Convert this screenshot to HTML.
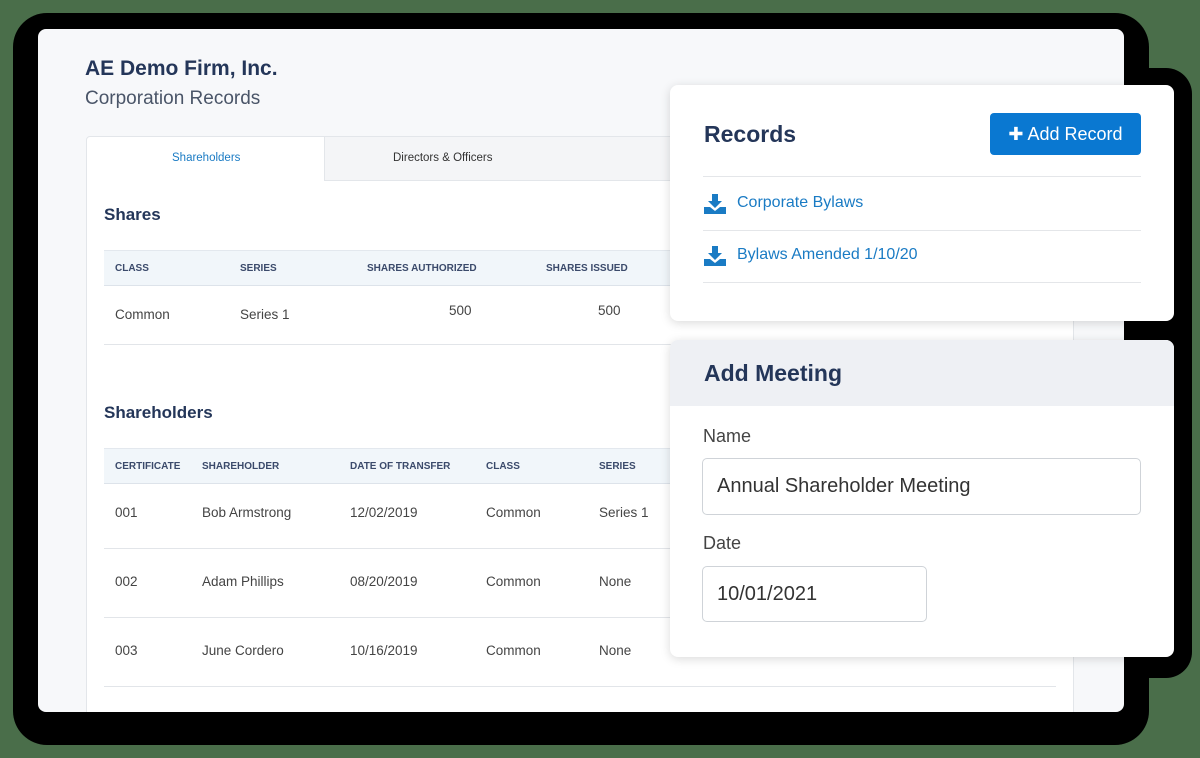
<!DOCTYPE html>
<html><head><meta charset="utf-8"><style>
*{box-sizing:border-box;margin:0;padding:0}
body{width:1200px;height:758px;background:#4a6e4a;position:relative;overflow:hidden;font-family:"Liberation Sans",sans-serif;color:#444}
.abs{position:absolute}
.blk{background:#000}
.main{left:38px;top:29px;width:1086px;height:683px;background:#f7f8fa;border-radius:8px;overflow:hidden}
.t1{left:47px;top:28px;font-size:21px;font-weight:bold;color:#243659}
.t2{left:47px;top:59px;font-size:19px;color:#4a5568}
.panel{left:48px;top:107px;width:988px;height:600px;background:#fff;border:1px solid #e3e6ea;border-radius:4px}
.tabbar{left:237px;top:0;width:750px;height:44px;background:#f4f5f7;border-bottom:1px solid #e3e6ea;border-left:1px solid #e3e6ea}
.h{font-size:17px;font-weight:bold;color:#243659}
.th{background:#f1f6fa;border-top:1px solid #e3e8ee;border-bottom:1px solid #dde3ea;height:36px;left:17px;width:952px}
.th span{position:absolute;top:12px;font-size:10px;font-weight:bold;color:#3b4a6b}
.row span{position:absolute;font-size:13.5px;color:#444}
.line{height:1px;background:#e2e5e9;left:17px;width:952px}
.card{background:#fff;border-radius:8px;box-shadow:0 2px 10px rgba(0,0,0,.15)}
.link{font-size:16px;color:#1a7bc4}
.inp{border:1px solid #cfd3d8;border-radius:5px;background:#fff;font-size:20px;color:#333;padding:0 14px;line-height:54px}
</style></head><body>
<div class="abs blk" style="left:13px;top:13px;width:1136px;height:732px;border-radius:34px"></div>
<div class="abs blk" style="left:1100px;top:68px;width:92px;height:610px;border-radius:26px"></div>

<div class="abs main">
 <div class="abs t1">AE Demo Firm, Inc.</div>
 <div class="abs t2">Corporation Records</div>
 <div class="abs panel">
  <div class="abs tabbar"></div>
  <div class="abs" style="left:85px;top:15px;font-size:11.5px;color:#1a7bc4">Shareholders</div>
  <div class="abs" style="left:306px;top:15px;font-size:11.5px;color:#333">Directors &amp; Officers</div>
  <div class="abs h" style="left:17px;top:68px">Shares</div>
  <div class="abs th" style="top:113px"><span style="left:11px">CLASS</span><span style="left:136px">SERIES</span><span style="left:263px">SHARES AUTHORIZED</span><span style="left:442px">SHARES ISSUED</span></div>
  <div class="abs row" style="left:17px;top:170px;width:952px"><span style="left:11px">Common</span><span style="left:136px">Series 1</span><span style="left:345px;top:-4px">500</span><span style="left:494px;top:-4px">500</span></div>
  <div class="abs line" style="top:207px"></div>
  <div class="abs h" style="left:17px;top:266px">Shareholders</div>
  <div class="abs th" style="top:311px"><span style="left:11px">CERTIFICATE</span><span style="left:98px">SHAREHOLDER</span><span style="left:246px">DATE OF TRANSFER</span><span style="left:382px">CLASS</span><span style="left:495px">SERIES</span></div>
  <div class="abs row" style="left:17px;top:368px"><span style="left:11px">001</span><span style="left:98px;white-space:nowrap">Bob Armstrong</span><span style="left:246px">12/02/2019</span><span style="left:382px">Common</span><span style="left:495px;white-space:nowrap">Series 1</span></div>
  <div class="abs line" style="top:411px"></div>
  <div class="abs row" style="left:17px;top:437px"><span style="left:11px">002</span><span style="left:98px;white-space:nowrap">Adam Phillips</span><span style="left:246px">08/20/2019</span><span style="left:382px">Common</span><span style="left:495px">None</span></div>
  <div class="abs line" style="top:480px"></div>
  <div class="abs row" style="left:17px;top:506px"><span style="left:11px">003</span><span style="left:98px;white-space:nowrap">June Cordero</span><span style="left:246px">10/16/2019</span><span style="left:382px">Common</span><span style="left:495px">None</span></div>
  <div class="abs line" style="top:549px"></div>
 </div>
</div>

<div class="abs card" style="left:670px;top:85px;width:504px;height:236px">
 <div class="abs" style="left:34px;top:36px;font-size:23px;font-weight:bold;color:#243659">Records</div>
 <div class="abs" style="left:320px;top:28px;width:151px;height:42px;background:#0a78d1;border-radius:4px;color:#fff;font-size:18px;line-height:42px;text-align:center">✚ Add Record</div>
 <div class="abs" style="left:33px;top:91px;width:438px;height:1px;background:#e4e6e9"></div>
 <svg class="abs" style="left:34px;top:108px" width="22" height="22" viewBox="0 0 22 22"><path d="M8 1h6v7h4l-7 7-7-7h4z" fill="#1a7bc4"/><path d="M0 14h6l5 4 5-4h6v7H0z" fill="#1a7bc4"/></svg>
 <div class="abs link" style="left:67px;top:109px">Corporate Bylaws</div>
 <div class="abs" style="left:33px;top:145px;width:438px;height:1px;background:#e4e6e9"></div>
 <svg class="abs" style="left:34px;top:160px" width="22" height="22" viewBox="0 0 22 22"><path d="M8 1h6v7h4l-7 7-7-7h4z" fill="#1a7bc4"/><path d="M0 14h6l5 4 5-4h6v7H0z" fill="#1a7bc4"/></svg>
 <div class="abs link" style="left:67px;top:161px">Bylaws Amended 1/10/20</div>
 <div class="abs" style="left:33px;top:197px;width:438px;height:1px;background:#e4e6e9"></div>
</div>

<div class="abs card" style="left:670px;top:340px;width:504px;height:317px;overflow:hidden">
 <div class="abs" style="left:0;top:0;width:504px;height:66px;background:#eef0f4"></div>
 <div class="abs" style="left:34px;top:20px;font-size:23px;font-weight:bold;color:#243659">Add Meeting</div>
 <div class="abs" style="left:33px;top:86px;font-size:18px;color:#444">Name</div>
 <div class="abs inp" style="left:32px;top:118px;width:439px;height:57px">Annual Shareholder Meeting</div>
 <div class="abs" style="left:33px;top:193px;font-size:18px;color:#444">Date</div>
 <div class="abs inp" style="left:32px;top:226px;width:225px;height:56px">10/01/2021</div>
</div>
</body></html>
